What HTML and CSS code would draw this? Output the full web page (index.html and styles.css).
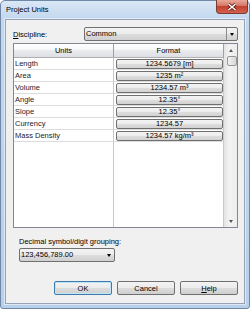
FILE: index.html
```html
<!DOCTYPE html>
<html>
<head>
<meta charset="UTF-8">
<title>Project Units</title>
<link rel="stylesheet" href="styles.css">
</head>
<body>
<div class="window">
  <div class="titlebar">
    <span class="title">Project Units</span>
    <span class="close">
      <svg width="10" height="8" viewBox="0 0 10 8"><path d="M1.5 1 L8.5 7 M8.5 1 L1.5 7" stroke="#5a1a14" stroke-width="3"/><path d="M1.5 1 L8.5 7 M8.5 1 L1.5 7" stroke="#fff" stroke-width="1.6"/></svg>
    </span>
  </div>
  <div class="client">
    <div class="discipline">
      <span class="label"><u>D</u>iscipline:</span>
      <div class="combo wide">
        <span class="value">Common</span>
        <span class="drop sep"><i class="tri"></i></span>
      </div>
    </div>

    <div class="grid">
      <div class="table">
        <div class="row head">
          <div class="cell">Units</div>
          <div class="cell">Format</div>
        </div>
        <div class="row"><div class="cell name">Length</div><div class="cell"><span class="fmt">1234.5679 [m]</span></div></div>
        <div class="row"><div class="cell name">Area</div><div class="cell"><span class="fmt">1235 m²</span></div></div>
        <div class="row"><div class="cell name">Volume</div><div class="cell"><span class="fmt">1234.57 m³</span></div></div>
        <div class="row"><div class="cell name">Angle</div><div class="cell"><span class="fmt">12.35°</span></div></div>
        <div class="row"><div class="cell name">Slope</div><div class="cell"><span class="fmt">12.35°</span></div></div>
        <div class="row"><div class="cell name">Currency</div><div class="cell"><span class="fmt">1234.57</span></div></div>
        <div class="row"><div class="cell name">Mass Density</div><div class="cell"><span class="fmt">1234.57 kg/m³</span></div></div>
        <div class="row filler"><div class="cell"></div><div class="cell"></div></div>
      </div>
      <div class="scrollbar">
        <div class="sb-btn"><i class="tri up"></i></div>
        <div class="thumb"></div>
        <div class="track"></div>
        <div class="sb-btn"><i class="tri small"></i></div>
      </div>
    </div>

    <div class="decimal">
      <div class="label">Decimal symbol/digit grouping:</div>
      <div class="combo narrow">
        <span class="value">123,456,789.00</span>
        <span class="drop"><i class="tri"></i></span>
      </div>
    </div>

    <div class="buttons">
      <button class="btn default">OK</button>
      <button class="btn">Cancel</button>
      <button class="btn"><u>H</u>elp</button>
    </div>
  </div>
</div>
</body>
</html>
```

FILE: styles.css
```css
* {
    margin: 0;
    padding: 0;
    box-sizing: border-box;
}
body {
    background: #fff;
    font-family: "Liberation Sans", Arial, sans-serif;
    font-size: 7.5px;
    color: #000;
}

.window {
    width: 250px;
    height: 309px;
    border: 1px solid #6f88a8;
    border-radius: 5px 5px 3px 3px;
    background: linear-gradient(#dae7f5, #c2d7ee 18px, #b9d0ea);
    display: flex;
    flex-direction: column;
}
.titlebar {
    height: 18px;
    display: flex;
    justify-content: space-between;
    align-items: flex-start;
}
.title {
    padding: 5px 0 0 5px;
    line-height: 8px;
}
.close {
    width: 32px;
    height: 14px;
    margin: -1px 1px 0 0;
    border: 1px solid #7b3a33;
    border-top: none;
    border-radius: 0 0 4px 4px;
    background: linear-gradient(#e9a99b, #d47565 45%, #c4412f 50%, #d2614f);
    display: flex;
    align-items: center;
    justify-content: center;
}

.client {
    flex: 1;
    margin: 0 4px 4px 4px;
    border: 1px solid #95a3b5;
    box-shadow: 0 0 0 1px rgba(255,255,255,0.5);
    background: #f0f0f0;
    padding: 7px 6px 8px 7px;
    display: flex;
    flex-direction: column;
}

.discipline {
    display: flex;
    justify-content: space-between;
    align-items: center;
    height: 14px;
}

.combo {
    height: 14px;
    border: 1px solid #707070;
    border-radius: 2px;
    background: linear-gradient(#f3f3f3, #ebebeb 50%, #dddddd 50%, #d0d0d0);
    display: flex;
    align-items: center;
    justify-content: space-between;
}
.combo .value {
    padding-left: 1px;
    line-height: 10px;
}
.combo.wide {
    width: 154px;
}
.combo.narrow {
    width: 96px;
    margin-top: 1px;
}
.drop {
    width: 11px;
    height: 100%;
    display: flex;
    align-items: center;
    justify-content: center;
}
.drop.sep {
    border-left: 1px solid #8a8a8a;
    width: 11px;
}
.tri {
    width: 0;
    height: 0;
    border-left: 2.5px solid transparent;
    border-right: 2.5px solid transparent;
    border-top: 3px solid #000;
}
.tri.up {
    border-top: none;
    border-bottom: 3px solid #555;
    border-left-width: 2px;
    border-right-width: 2px;
}
.tri.small {
    border-top-color: #555;
    border-left-width: 2px;
    border-right-width: 2px;
}

.grid {
    margin-top: 2px;
    height: 185px;
    border: 1px solid #828790;
    background: #fff;
    display: flex;
}
.table {
    width: 210px;
    display: flex;
    flex-direction: column;
}
.row {
    display: grid;
    grid-template-columns: 100px 110px;
    height: 12px;
}
.cell {
    border-right: 1px solid #c8c8c8;
    border-bottom: 1px solid #dcdcdc;
    line-height: 11px;
    overflow: hidden;
    white-space: nowrap;
}
.cell.name {
    padding-left: 1px;
    color: #1e1a2c;
}
.row.head {
    height: 14px;
}
.row.head .cell {
    text-align: center;
    line-height: 13px;
    background: linear-gradient(#ffffff, #f4f5f7 50%, #e9ebee 50%, #dcdfe4);
    border-right: 1px solid #a0a0a0;
    border-bottom: 1px solid #b0b0b0;
}
.row.filler {
    flex: 1;
}
.row.filler .cell {
    border-bottom: none;
}
.fmt {
    display: block;
    height: 10px;
    margin: 1px 0 0 2px;
    border: 1px solid #6f6f6f;
    border-radius: 2px;
    background: linear-gradient(#f4f4f4, #ececec 50%, #dedede 50%, #d2d2d2);
    text-align: center;
    line-height: 8px;
}

.scrollbar {
    width: 13px;
    background: linear-gradient(90deg, #e3e3e3, #f3f3f3 40%, #ededed);
    display: flex;
    flex-direction: column;
    align-items: center;
}
.sb-btn {
    height: 12px;
    width: 100%;
    display: flex;
    align-items: center;
    justify-content: center;
}
.thumb {
    width: 10px;
    height: 10px;
    margin-left: 2px;
    border: 1px solid #979797;
    border-radius: 2px;
    background: linear-gradient(90deg, #f2f2f2, #e4e4e4 50%, #d6d6d6);
}
.track {
    flex: 1;
}

.decimal {
    margin: 9px 0 0 6px;
}
.decimal .label {
    line-height: 10px;
}

.buttons {
    margin-top: 19px;
    display: flex;
    justify-content: flex-end;
    gap: 5px;
}
.btn {
    width: 58px;
    height: 14px;
    font-family: inherit;
    font-size: 7.5px;
    color: #000;
    border: 1px solid #707070;
    border-radius: 2px;
    background: linear-gradient(#f3f3f3, #ebebeb 50%, #dddddd 50%, #cfcfcf);
}
.btn.default {
    border-color: #3d7bad;
    box-shadow: inset 0 0 0 1px #bfe3f7;
}
```
